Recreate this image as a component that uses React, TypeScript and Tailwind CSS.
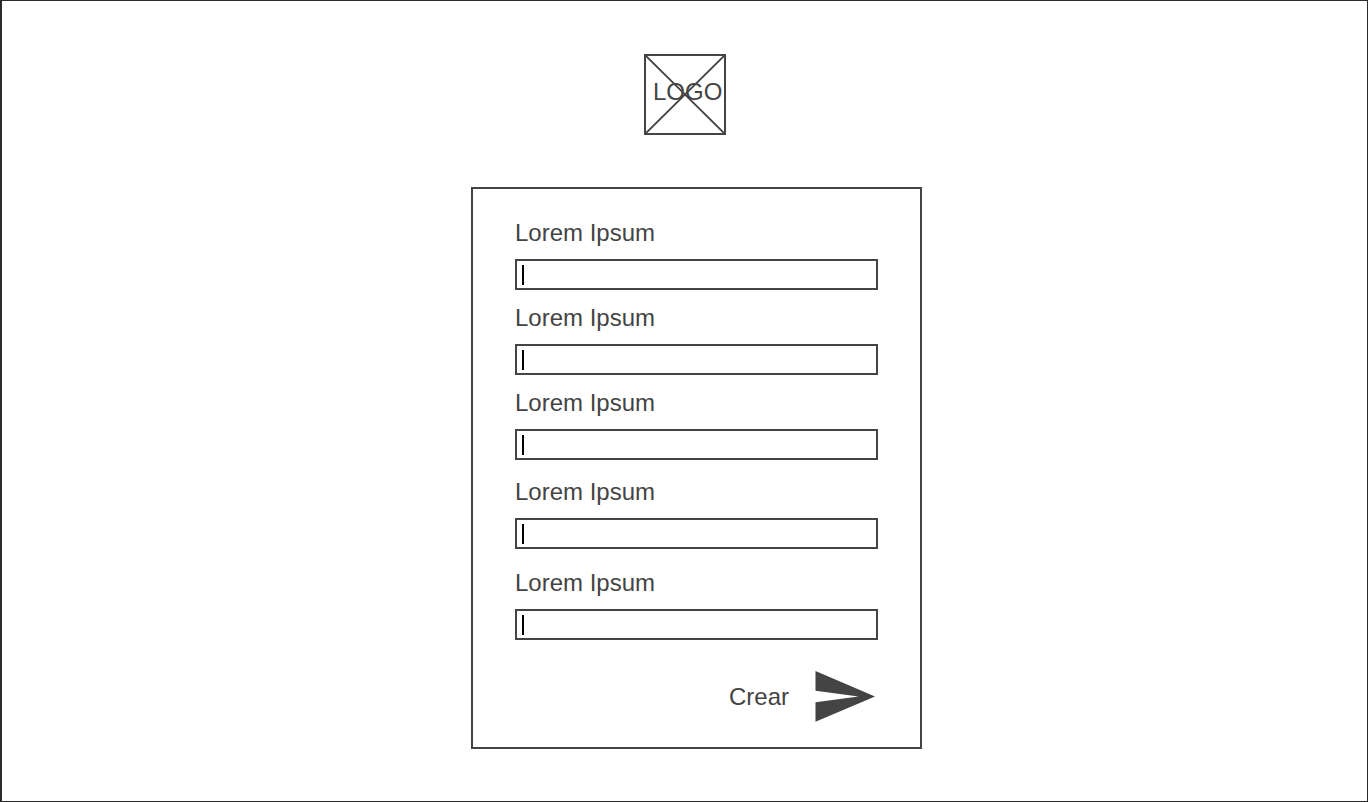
import React from "react";

const fields = [
  { id: "field-1", label: "Lorem Ipsum", spacing: "" },
  { id: "field-2", label: "Lorem Ipsum", spacing: "mt-3" },
  { id: "field-3", label: "Lorem Ipsum", spacing: "mt-3" },
  { id: "field-4", label: "Lorem Ipsum", spacing: "mt-4" },
  { id: "field-5", label: "Lorem Ipsum", spacing: "mt-[18px]" },
];

function Logo() {
  return (
    <div className="relative h-[81px] w-[82px] border-2 border-[#444]">
      <svg
        className="block h-full w-full"
        viewBox="0 0 78 77"
        preserveAspectRatio="none"
        aria-hidden="true"
      >
        <path d="M-1 -1L79 78M79 -1L-1 78" stroke="#444" strokeWidth="1.9" fill="none" />
      </svg>
      <span className="absolute top-5 left-[7px] text-2xl">LOGO</span>
    </div>
  );
}

function Field({ id, label, spacing }: { id: string; label: string; spacing: string }) {
  return (
    <div className={spacing}>
      <label htmlFor={id} className="block text-2xl">
        {label}
      </label>
      <div className="relative mt-2.5">
        <input
          id={id}
          type="text"
          className="block h-[31px] w-full border-2 border-[#444] bg-white px-2 text-base outline-none"
        />
        <span className="pointer-events-none absolute top-1.5 left-[7px] h-5 w-0.5 bg-black" />
      </div>
    </div>
  );
}

export default function App() {
  return (
    <main className="flex min-h-screen flex-col items-center border border-l-2 border-[#2b2b2b] bg-white pt-[53px] pb-[52px] font-['Liberation_Sans',Arial,sans-serif] text-[#444]">
      <header className="flex w-full justify-center pl-px">
        <Logo />
      </header>
      <div className="mt-[52px] flex w-full justify-center pl-6">
        <form
          onSubmit={(e) => e.preventDefault()}
          className="w-full max-w-[451px] border-2 border-[#444] px-[42px] pt-7 pb-[25px]"
        >
          {fields.map((f) => (
            <Field key={f.id} {...f} />
          ))}
          <div className="mt-[31px] flex justify-end pr-[3px]">
            <button type="submit" className="flex cursor-pointer items-center gap-[26px] text-2xl leading-[31px]">
              Crear
              <svg className="block h-[51px] w-[60px]" viewBox="0 0 60 51" aria-hidden="true">
                <path d="M.5 0L60 25.4L.5 50.8V31.2L43.5 25.4L.5 19.7Z" fill="#444" />
              </svg>
            </button>
          </div>
        </form>
      </div>
    </main>
  );
}
